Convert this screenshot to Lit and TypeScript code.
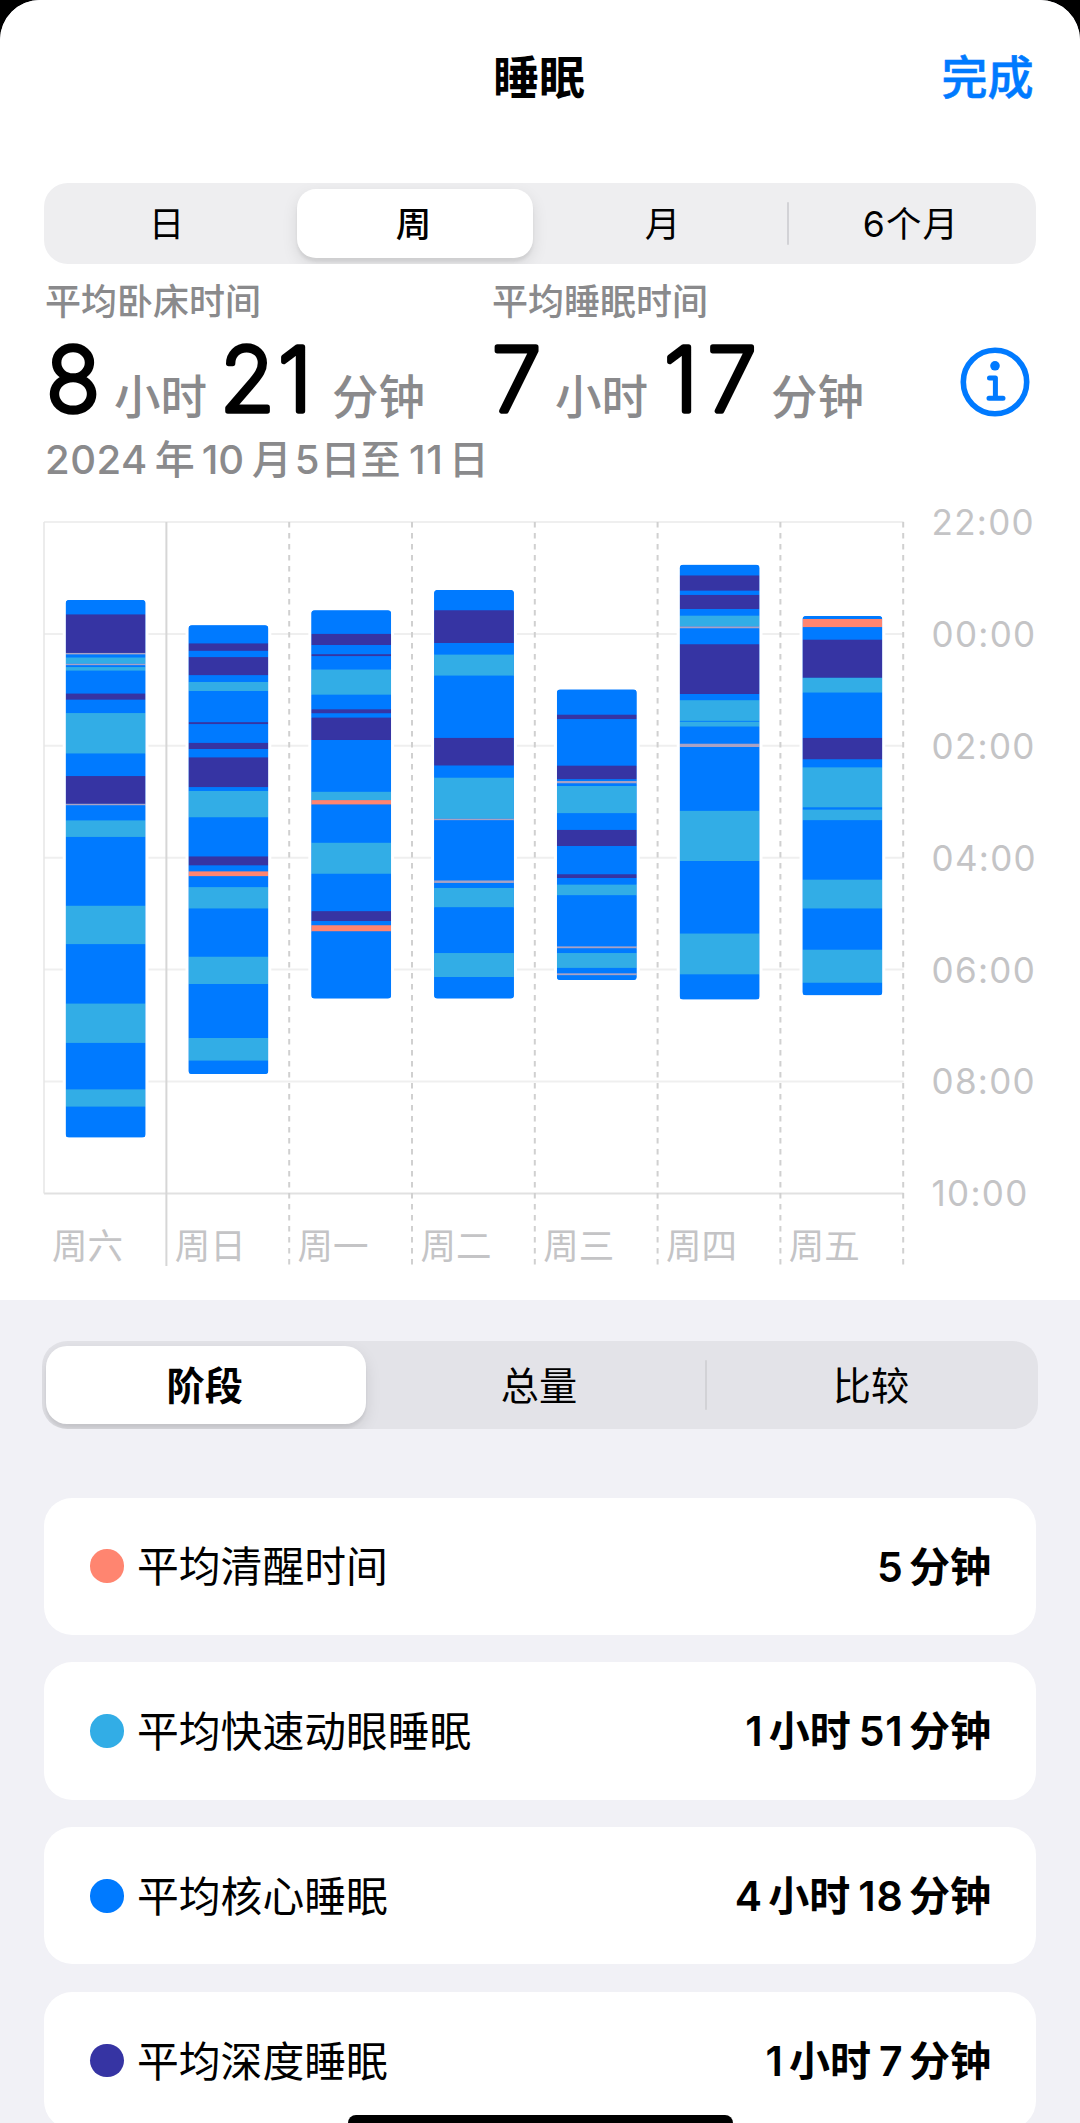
import { LitElement, html, css, svg } from "lit";
import { customElement, property } from "lit/decorators.js";

type Stage = "C" | "D" | "R" | "W" | "P";

const STAGE_COLORS: Record<Stage, string> = {
  C: "#007aff",
  D: "#3634a3",
  R: "#32ade6",
  W: "#ff8570",
  P: "#a9a2c4",
};

// Nights are logged on a time scale of 135 units per hour; 22:00 is unit 29.
// Every step is the stage letter followed by the unit at which it ends.
const UNITS_PER_HOUR = 135;
const ORIGIN = 29;

interface Night {
  day: string;
  start: number;
  steps: string;
}

const NIGHTS: Night[] = [
  { day: "周六", start: 217, steps: "C252 D345 P349 C356 R371 P375 C379 R388 C443 D458 C490 R588 C642 D709 P713 C749 R789 C955 R1048 C1191 R1286 C1398 R1440 C1514" },
  { day: "周日", start: 278, steps: "C322 D340 C355 D399 C415 R437 C512 D517 C562 D577 C597 D669 C678 R742 C836 D858 C872 W884 C910 R962 C1078 R1144 C1274 R1329 C1361" },
  { day: "周一", start: 242, steps: "C299 D326 C348 D353 C385 R446 C481 D491 C501 D555 C680 R700 W711 C803 R878 C968 D992 C1002 W1017 C1179" },
  { day: "周二", start: 193, steps: "C242 D321 C349 R400 C550 D617 C646 R745 P749 C894 P900 C912 R959 C1069 R1127 C1179" },
  { day: "周三", start: 433, steps: "C494 D505 C617 D650 C654 P660 C666 R732 C772 D811 C879 D888 C904 R930 C1053 P1058 C1069 R1105 C1118 P1123 C1134" },
  { day: "周四", start: 132, steps: "C158 D195 C205 D239 C255 R281 P286 C324 D444 C459 R509 C511 R523 C564 P572 C726 R847 C1022 R1121 C1181" },
  { day: "周五", start: 256, steps: "C263 W283 C313 D405 R441 C550 D602 C621 R718 C723 R749 C892 R962 C1061 R1141 C1171" },
];

const HOURS = ["22:00", "00:00", "02:00", "04:00", "06:00", "08:00", "10:00"];

const COL = 122.8;
const ROW = 111.9;
const BAR_X = 21.7;
const BAR_W = 79.8;

const toY = (unit: number) => ((unit - ORIGIN) / (UNITS_PER_HOUR * 2)) * ROW;

const FONT = css`"Inter", "Noto Sans CJK SC", sans-serif`;

@customElement("segmented-control")
class SegmentedControl extends LitElement {
  @property({ attribute: false }) items: string[] = [];
  @property({ type: Number }) selected = 0;

  static styles = css`
    :host {
      display: block;
    }
    .track {
      display: flex;
      box-sizing: border-box;
      height: 100%;
      border-radius: var(--seg-radius, 24px);
      background: var(--seg-bg, #eeeef0);
      padding: var(--seg-pad, 6px 0);
      overflow: hidden;
    }
    .item {
      flex: 1 1 0;
      display: flex;
      align-items: center;
      justify-content: center;
      font-family: ${FONT};
      font-size: var(--seg-font, 35.5px);
      letter-spacing: var(--seg-spacing, 1.2px);
      line-height: 1;
      color: #000;
    }
    .face {
      flex: 1;
      align-self: stretch;
      display: flex;
      align-items: center;
      justify-content: center;
      padding: 2px 2px 0 0;
      border-radius: var(--pill-radius, 19px);
    }
    .on {
      background: #fff;
      font-weight: var(--on-weight, 500);
      margin: var(--pill-margin, 0 7px 0 5px);
      box-shadow: 0 6px 16px rgba(0, 0, 0, 0.1), 0 4px 3px rgba(0, 0, 0, 0.06);
    }
    .sep {
      width: 2px;
      margin: var(--sep-margin, 13px -1px);
      background: #d2d2d6;
      border-radius: 1px;
    }
    .hidden {
      background: transparent;
    }
  `;

  render() {
    return html`<div class="track">
      ${this.items.map((label, i) => {
        const shown = i > this.selected + 1;
        return html`${i > 0 ? html`<span class="sep ${shown ? "" : "hidden"}"></span>` : ""}
          <span class="item"><span class="face ${i === this.selected ? "on" : ""}">${label}</span></span>`;
      })}
    </div>`;
  }
}

@customElement("round-number")
class RoundNumber extends LitElement {
  @property() value = "";
  @property({ attribute: false }) centers: number[] = [];
  @property({ type: Number }) width = 50;

  static styles = css`
    :host {
      display: inline-block;
    }
    .num {
      display: inline-block;
      overflow: visible;
    }
    .digit {
      font-family: ${FONT};
      font-size: 88px;
      font-weight: 200;
      fill: #000;
      stroke: #000;
      stroke-width: 5.4px;
      stroke-linejoin: round;
      text-anchor: middle;
    }
  `;

  render() {
    return html`<svg class="num" width=${this.width} height="70">
      ${[...this.value].map((d, i) => svg`<text class="digit" x=${this.centers[i]} y="66.8">${d}</text>`)}
    </svg>`;
  }
}

@customElement("sleep-chart")
class SleepChart extends LitElement {
  static styles = css`
    :host {
      display: flex;
      font-family: ${FONT};
      color: #c4c4c6;
    }
    .plot {
      width: 863px;
      display: flex;
      flex-direction: column;
    }
    .canvas {
      display: block;
      height: 672px;
      width: 863px;
      overflow: visible;
    }
    .days {
      display: grid;
      grid-template-columns: repeat(7, 122.8px);
      height: 74px;
      align-items: center;
    }
    .day {
      padding: 32px 0 0 8.5px;
      font-size: 35.5px;
      line-height: 40px;
    }
    .hours {
      display: flex;
      flex-direction: column;
      margin: -20px 0 0 25px;
    }
    .hour {
      height: 111.9px;
      font-size: 35px;
      line-height: 40px;
      letter-spacing: 1.3px;
    }
    .grid {
      stroke: #efefef;
      stroke-width: 2;
    }
    .base {
      stroke: #e1e1e1;
      stroke-width: 2;
    }
    .edge {
      stroke: #e6e6e6;
      stroke-width: 1.5;
    }
    .week {
      stroke: #d6d6d6;
      stroke-width: 2;
    }
    .dash {
      stroke: #d0d0d0;
      stroke-width: 2;
      stroke-dasharray: 5.5 5.5;
    }
    .halo {
      fill: #fff;
    }
  `;

  private bar(night: Night, col: number) {
    const x = col * COL + BAR_X;
    let from = night.start;
    const top = toY(night.start);
    const parts = night.steps.split(" ").map((s) => {
      const stage = s[0] as Stage;
      const to = Number(s.slice(1));
      const y = toY(from);
      const h = toY(to) - y;
      from = to;
      return svg`<rect x=${x} y=${y} width=${BAR_W} height=${h} fill=${STAGE_COLORS[stage]}></rect>`;
    });
    const height = toY(from) - top;
    return svg`
      <rect class="halo" x=${x - 3} y=${top - 2} width=${BAR_W + 6} height=${height + 4}></rect>
      <clipPath id="night-${col}"><rect x=${x} y=${top} width=${BAR_W} height=${height} rx="3.5"></rect></clipPath>
      <g clip-path="url(#night-${col})">
        <rect x=${x} y=${top} width=${BAR_W} height=${height} fill="#007aff"></rect>
        ${parts}
      </g>`;
  }

  render() {
    const right = COL * 7;
    return html`
      <div class="plot">
        <svg class="canvas" viewBox="0 0 863 672">
          ${HOURS.map((_, i) => svg`<line class=${i === 6 ? "base" : "grid"} x1="0" x2=${right} y1=${i * ROW} y2=${i * ROW}></line>`)}
          <line class="edge" x1="0" x2="0" y1="0" y2=${ROW * 6}></line>
          ${[1, 2, 3, 4, 5, 6, 7].map((i) => svg`<line class=${i === 1 ? "week" : "dash"} x1=${i * COL - 0.4} x2=${i * COL - 0.4} y1="0" y2="744"></line>`)}
          ${NIGHTS.map((n, i) => this.bar(n, i))}
        </svg>
        <div class="days">${NIGHTS.map((n) => html`<span class="day">${n.day}</span>`)}</div>
      </div>
      <div class="hours">${HOURS.map((h) => html`<span class="hour">${h}</span>`)}</div>
    `;
  }
}

const STAGES = [
  { name: "平均清醒时间", color: "awake", value: ["5", "分钟"] },
  { name: "平均快速动眼睡眠", color: "rem", value: ["1", "小时", "51", "分钟"] },
  { name: "平均核心睡眠", color: "core", value: ["4", "小时", "18", "分钟"] },
  { name: "平均深度睡眠", color: "deep", value: ["1", "小时", "7", "分钟"] },
];

const isDigits = (s: string) => /^\d+$/.test(s);

@customElement("app-root")
class AppRoot extends LitElement {
  static styles = css`
    :host {
      display: block;
      height: 2123px;
      overflow: hidden;
      background: #000;
      font-family: ${FONT};
      color: #000;
    }
    .sheet {
      position: relative;
      display: flex;
      flex-direction: column;
      height: 2123px;
      border-radius: 40px 40px 0 0;
      overflow: hidden;
      background: #f1f1f6;
    }
    .top {
      box-sizing: border-box;
      height: 1300px;
      background: #fff;
      padding: 0 44px;
      flex: none;
    }
    .nav {
      display: grid;
      grid-template-columns: 1fr auto 1fr;
      align-items: center;
      height: 154px;
      font-size: 46px;
      line-height: 50px;
    }
    .title {
      grid-column: 2;
      font-weight: 700;
      margin-right: 2px;
    }
    .done {
      justify-self: end;
      color: #007aff;
      font-weight: 500;
      -webkit-text-stroke: 0.6px #007aff;
      margin-right: 2.5px;
    }
    .period {
      height: 81px;
      margin-top: 29px;
    }
    .stats {
      display: flex;
      margin-top: 17px;
      height: 141px;
    }
    .stat {
      width: 447px;
    }
    .label {
      font-size: 36px;
      line-height: 40px;
      color: #8a8a8c;
      font-weight: 500;
      padding: 1px 0 0 1px;
    }
    .value {
      display: flex;
      align-items: baseline;
      height: 78px;
      margin-top: 22px;
    }
    .unit {
      font-size: 46.5px;
      line-height: 50px;
      color: #8a8a8c;
      font-weight: 500;
      white-space: nowrap;
    }
    .info {
      width: 70px;
      height: 70px;
      margin: 66px 0 0 22px;
      flex: none;
    }
    .range {
      display: flex;
      font-size: 40px;
      line-height: 44px;
      height: 44px;
      margin-top: 16px;
      color: #8a8a8c;
      font-weight: 500;
      padding-left: 1px;
    }
    .r-year {
      letter-spacing: 0.5px;
      margin-right: 7px;
    }
    .r-month {
      margin: 0 7.5px 0 7px;
    }
    .r-from {
      margin: 0 1px 0 3px;
    }
    .r-to {
      letter-spacing: 0.8px;
      margin: 0 5px 0 8.5px;
    }
    .chart {
      margin: 40px 0 0 -0.5px;
    }
    .mode {
      height: 88px;
      margin: 41px 42px 0;
      flex: none;
      --seg-bg: #e3e3e8;
      --seg-pad: 5px 0;
      --seg-font: 38.2px;
      --seg-spacing: 0px;
      --seg-radius: 25px;
      --pill-radius: 21px;
      --pill-margin: 0 8.5px 0 4px;
      --on-weight: 600;
      --sep-margin: 14px -1px;
    }
    .cards {
      display: flex;
      flex-direction: column;
      gap: 27.4px;
      padding: 68.5px 44px 0;
    }
    .card {
      box-sizing: border-box;
      display: flex;
      align-items: center;
      height: 137.4px;
      flex: none;
      background: #fff;
      border-radius: 28px;
      padding: 0 45px 0 46px;
      font-size: 41.8px;
      line-height: 50px;
    }
    .name {
      padding-top: 2px;
    }
    .dot {
      width: 33.5px;
      height: 33.5px;
      border-radius: 50%;
      margin-right: 13.5px;
    }
    .awake {
      background: #ff8570;
    }
    .rem {
      background: #32ade6;
    }
    .core {
      background: #007aff;
    }
    .deep {
      background: #3634a3;
    }
    .amount {
      display: flex;
      margin-left: auto;
      padding-top: 1px;
      font-size: 41px;
      font-weight: 600;
    }
    .amount .lat {
      letter-spacing: 0.8px;
    }
    .amount .cjk {
      margin-left: 5.5px;
    }
    .amount .cjk + .lat {
      margin-left: 8px;
    }
    .home {
      position: absolute;
      left: 348px;
      bottom: 0;
      width: 385px;
      height: 8px;
      border-radius: 8px 8px 0 0;
      background: #000;
    }
    .g12 {
      margin-right: 12px;
    }
    .g13 {
      margin-right: 13px;
    }
    .g21 {
      margin-right: 21px;
    }
  `;

  private runs(parts: string[]) {
    return parts.map((p) => html`<span class=${isDigits(p) ? "lat" : "cjk"}>${p}</span>`);
  }

  render() {
    return html`
      <main class="sheet">
        <section class="top">
          <header class="nav">
            <span class="title">睡眠</span>
            <span class="done">完成</span>
          </header>
          <segmented-control class="period" .items=${["日", "周", "月", "6个月"]} .selected=${1}></segmented-control>
          <div class="stats">
            <div class="stat">
              <div class="label">平均卧床时间</div>
              <div class="value">
                <round-number class="g12" value="8" .width=${58} .centers=${[29]}></round-number>
                <span class="unit g12">小时</span>
                <round-number class="g21" value="21" .width=${92} .centers=${[28.5, 76]}></round-number>
                <span class="unit">分钟</span>
              </div>
            </div>
            <div class="stat">
              <div class="label">平均睡眠时间</div>
              <div class="value">
                <round-number class="g13" value="7" .width=${51} .centers=${[25.5]}></round-number>
                <span class="unit g12">小时</span>
                <round-number class="g13" value="17" .width=${98} .centers=${[21, 72]}></round-number>
                <span class="unit">分钟</span>
              </div>
            </div>
            <svg class="info" viewBox="0 0 70 70" fill="none" stroke="#007aff" stroke-linecap="round" stroke-linejoin="round">
              <circle cx="35" cy="35" r="31.7" stroke-width="5.6"></circle>
              <circle cx="35" cy="18.8" r="4.8" fill="#007aff" stroke="none"></circle>
              <path d="M29.5 31H35.4V51M29 51.3H43" stroke-width="5"></path>
            </svg>
          </div>
          <div class="range">
            <span class="r-year">2024</span><span>年</span><span class="r-month">10</span><span>月</span
            ><span class="r-from">5</span><span>日至</span><span class="r-to">11</span><span>日</span>
          </div>
          <sleep-chart class="chart"></sleep-chart>
        </section>
        <segmented-control class="mode" .items=${["阶段", "总量", "比较"]} .selected=${0}></segmented-control>
        <section class="cards">
          ${STAGES.map(
            (s) => html`<article class="card">
              <span class="dot ${s.color}"></span>
              <span class="name">${s.name}</span>
              <span class="amount">${this.runs(s.value)}</span>
            </article>`
          )}
        </section>
        <div class="home"></div>
      </main>
    `;
  }
}
